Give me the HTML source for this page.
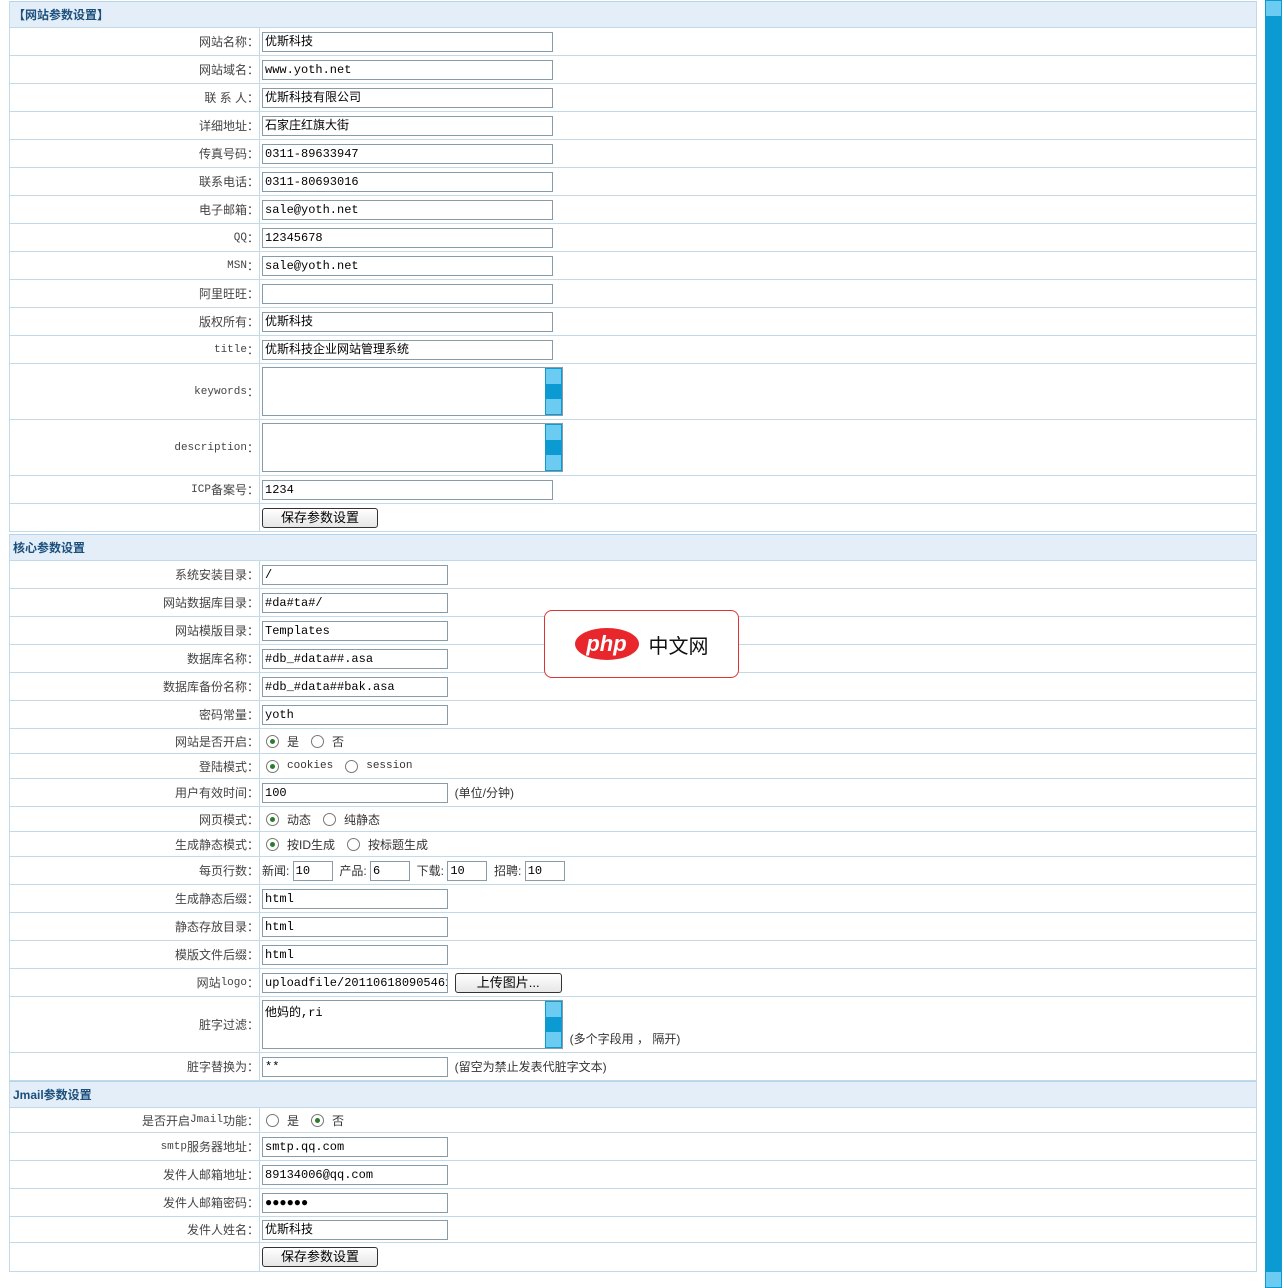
<!DOCTYPE html>
<html><head><meta charset="utf-8"><style>
*{margin:0;padding:0;box-sizing:border-box}
body{width:1284px;height:1288px;background:#fff;position:relative;overflow:hidden;font:12px "Liberation Sans","Noto Sans CJK SC",sans-serif;color:#333}
.r{position:absolute;left:9px;width:1248px;border:1px solid #c3d9e8;border-top:none;display:flex}
.h{background:#e3eef8;color:#1b4f7c;font-weight:bold;align-items:center;padding-left:3px;border-top:1px solid #b6d3ea}
.l{width:250px;text-align:right;padding-right:0;display:flex;align-items:center;justify-content:flex-end;border-right:1px solid #c3d9e8;color:#444}
.v{flex:1;display:flex;align-items:center;padding-left:2px}
.i{display:inline-block;height:20px;border:1px solid #8a9ba8;font:12px "Liberation Mono","Noto Sans CJK SC",monospace;color:#000;padding:2px 2px;line-height:15px;white-space:nowrap;overflow:hidden;background:#fff}
.ta{position:relative;width:301px;height:49px;border:1px solid #8a9ba8;padding:2px;font:12px "Liberation Mono","Noto Sans CJK SC",monospace;color:#000}
.sb{position:absolute;right:0;top:0;width:17px;height:47px;background:#0b9ad2}
.sb:before,.sb:after{content:"";position:absolute;left:1px;width:15px;height:15px;background:#6ccbf0}
.sb:before{top:1px}.sb:after{bottom:1px}
.btn{display:inline-block;width:116px;height:20px;border:1px solid #333;border-radius:3px;background:linear-gradient(#fff,#e6e6e6);text-align:center;font-size:13px;line-height:18px;color:#000}
.rd{display:inline-block;width:13px;height:13px;border:1px solid #777;border-radius:50%;margin:0 8px 0 4px;position:relative;background:#fff}
.rd.on:after{content:"";position:absolute;left:3px;top:3px;width:5px;height:5px;border-radius:50%;background:#2d7b2d}
.s{font-size:11px;font-family:"Liberation Mono",monospace}
.t{margin-right:8px}
</style></head><body>
<div class="r h" style="top:1px;height:27px;border-top:1px solid #b6d3ea">【网站参数设置】</div>
<div class="r" style="top:28px;height:28px"><div class="l">网站名称：</div><div class="v"><span class="i" style="width:291px">优斯科技</span></div></div>
<div class="r" style="top:56px;height:28px"><div class="l">网站域名：</div><div class="v"><span class="i" style="width:291px">www.yoth.net</span></div></div>
<div class="r" style="top:84px;height:28px"><div class="l">联 系 人：</div><div class="v"><span class="i" style="width:291px">优斯科技有限公司</span></div></div>
<div class="r" style="top:112px;height:28px"><div class="l">详细地址：</div><div class="v"><span class="i" style="width:291px">石家庄红旗大街</span></div></div>
<div class="r" style="top:140px;height:28px"><div class="l">传真号码：</div><div class="v"><span class="i" style="width:291px">0311-89633947</span></div></div>
<div class="r" style="top:168px;height:28px"><div class="l">联系电话：</div><div class="v"><span class="i" style="width:291px">0311-80693016</span></div></div>
<div class="r" style="top:196px;height:28px"><div class="l">电子邮箱：</div><div class="v"><span class="i" style="width:291px">sale@yoth.net</span></div></div>
<div class="r" style="top:224px;height:28px"><div class="l"><span class="s">QQ</span>：</div><div class="v"><span class="i" style="width:291px">12345678</span></div></div>
<div class="r" style="top:252px;height:28px"><div class="l"><span class="s">MSN</span>：</div><div class="v"><span class="i" style="width:291px">sale@yoth.net</span></div></div>
<div class="r" style="top:280px;height:28px"><div class="l">阿里旺旺：</div><div class="v"><span class="i" style="width:291px"></span></div></div>
<div class="r" style="top:308px;height:28px"><div class="l">版权所有：</div><div class="v"><span class="i" style="width:291px">优斯科技</span></div></div>
<div class="r" style="top:336px;height:28px"><div class="l"><span class="s">title</span>：</div><div class="v"><span class="i" style="width:291px">优斯科技企业网站管理系统</span></div></div>
<div class="r" style="top:364px;height:56px"><div class="l"><span class="s">keywords</span>：</div><div class="v"><div class="ta"><div class="sb"></div></div></div></div>
<div class="r" style="top:420px;height:56px"><div class="l"><span class="s">description</span>：</div><div class="v"><div class="ta"><div class="sb"></div></div></div></div>
<div class="r" style="top:476px;height:28px"><div class="l"><span class="s">ICP</span>备案号：</div><div class="v"><span class="i" style="width:291px">1234</span></div></div>
<div class="r" style="top:504px;height:28px"><div class="l"></div><div class="v"><span class="btn">保存参数设置</span></div></div>
<div class="r h" style="top:534px;height:27px">核心参数设置</div>
<div class="r" style="top:561px;height:28px"><div class="l">系统安装目录：</div><div class="v"><span class="i" style="width:186px">/</span></div></div>
<div class="r" style="top:589px;height:28px"><div class="l">网站数据库目录：</div><div class="v"><span class="i" style="width:186px">#da#ta#/</span></div></div>
<div class="r" style="top:617px;height:28px"><div class="l">网站模版目录：</div><div class="v"><span class="i" style="width:186px">Templates</span></div></div>
<div class="r" style="top:645px;height:28px"><div class="l">数据库名称：</div><div class="v"><span class="i" style="width:186px">#db_#data##.asa</span></div></div>
<div class="r" style="top:673px;height:28px"><div class="l">数据库备份名称：</div><div class="v"><span class="i" style="width:186px">#db_#data##bak.asa</span></div></div>
<div class="r" style="top:701px;height:28px"><div class="l">密码常量：</div><div class="v"><span class="i" style="width:186px">yoth</span></div></div>
<div class="r" style="top:729px;height:25px"><div class="l">网站是否开启：</div><div class="v"><span class="rd on"></span><span class="t">是</span><span class="rd"></span>否</div></div>
<div class="r" style="top:754px;height:25px"><div class="l">登陆模式：</div><div class="v"><span class="rd on"></span><span class="s t">cookies</span><span class="rd"></span><span class="s">session</span></div></div>
<div class="r" style="top:779px;height:28px"><div class="l">用户有效时间：</div><div class="v"><span class="i" style="width:186px">100</span>&nbsp;&nbsp;(单位/分钟)</div></div>
<div class="r" style="top:807px;height:25px"><div class="l">网页模式：</div><div class="v"><span class="rd on"></span><span class="t">动态</span><span class="rd"></span>纯静态</div></div>
<div class="r" style="top:832px;height:25px"><div class="l">生成静态模式：</div><div class="v"><span class="rd on"></span><span class="t">按ID生成</span><span class="rd"></span>按标题生成</div></div>
<div class="r" style="top:857px;height:28px"><div class="l">每页行数：</div><div class="v" style="padding-left:2px">新闻:&nbsp;<span class="i" style="width:40px">10</span>&nbsp;&nbsp;产品:&nbsp;<span class="i" style="width:40px">6</span>&nbsp;&nbsp;下载:&nbsp;<span class="i" style="width:40px">10</span>&nbsp;&nbsp;招聘:&nbsp;<span class="i" style="width:40px">10</span></div></div>
<div class="r" style="top:885px;height:28px"><div class="l">生成静态后缀：</div><div class="v"><span class="i" style="width:186px">html</span></div></div>
<div class="r" style="top:913px;height:28px"><div class="l">静态存放目录：</div><div class="v"><span class="i" style="width:186px">html</span></div></div>
<div class="r" style="top:941px;height:28px"><div class="l">模版文件后缀：</div><div class="v"><span class="i" style="width:186px">html</span></div></div>
<div class="r" style="top:969px;height:28px"><div class="l">网站<span class="s">logo</span>：</div><div class="v"><span class="i" style="width:186px">uploadfile/201106180905461</span>&nbsp;&nbsp;<span class="btn" style="width:107px">上传图片...</span></div></div>
<div class="r" style="top:997px;height:56px"><div class="l">脏字过滤：</div><div class="v" style="align-items:center"><div class="ta">他妈的,ri<div class="sb"></div></div><span style="align-self:flex-end;margin-bottom:5px">&nbsp;&nbsp;(多个字段用 ， 隔开)</span></div></div>
<div class="r" style="top:1053px;height:28px"><div class="l">脏字替换为：</div><div class="v"><span class="i" style="width:186px">**</span>&nbsp;&nbsp;(留空为禁止发表代脏字文本)</div></div>
<div class="r h" style="top:1081px;height:27px">Jmail参数设置</div>
<div class="r" style="top:1108px;height:25px"><div class="l">是否开启<span class="s">Jmail</span>功能：</div><div class="v"><span class="rd"></span><span class="t">是</span><span class="rd on"></span>否</div></div>
<div class="r" style="top:1133px;height:28px"><div class="l"><span class="s">smtp</span>服务器地址：</div><div class="v"><span class="i" style="width:186px">smtp.qq.com</span></div></div>
<div class="r" style="top:1161px;height:28px"><div class="l">发件人邮箱地址：</div><div class="v"><span class="i" style="width:186px">89134006@qq.com</span></div></div>
<div class="r" style="top:1189px;height:28px"><div class="l">发件人邮箱密码：</div><div class="v"><span class="i" style="width:186px">●●●●●●</span></div></div>
<div class="r" style="top:1217px;height:26px"><div class="l">发件人姓名：</div><div class="v"><span class="i" style="width:186px">优斯科技</span></div></div>
<div class="r" style="top:1243px;height:29px"><div class="l"></div><div class="v"><span class="btn">保存参数设置</span></div></div>
<div style="position:absolute;left:544px;top:610px;width:195px;height:68px;border:1px solid #d33;border-radius:8px;background:#fff;display:flex;align-items:center;justify-content:center">
<div style="width:64px;height:32px;border-radius:50%;background:#e8262c;color:#fff;font:italic bold 22px 'Liberation Sans',sans-serif;display:flex;align-items:center;justify-content:center">php</div>
<span style="margin-left:10px;font:20px 'Noto Sans CJK SC',sans-serif;color:#111">中文网</span></div>
<div style="position:absolute;left:1265px;top:0;width:17px;height:1288px;background:#0b9ad2"></div>
<div style="position:absolute;left:1266px;top:1px;width:15px;height:15px;background:#6ccbf0"></div>
<div style="position:absolute;left:1266px;top:1272px;width:15px;height:15px;background:#6ccbf0"></div>
</body></html>
